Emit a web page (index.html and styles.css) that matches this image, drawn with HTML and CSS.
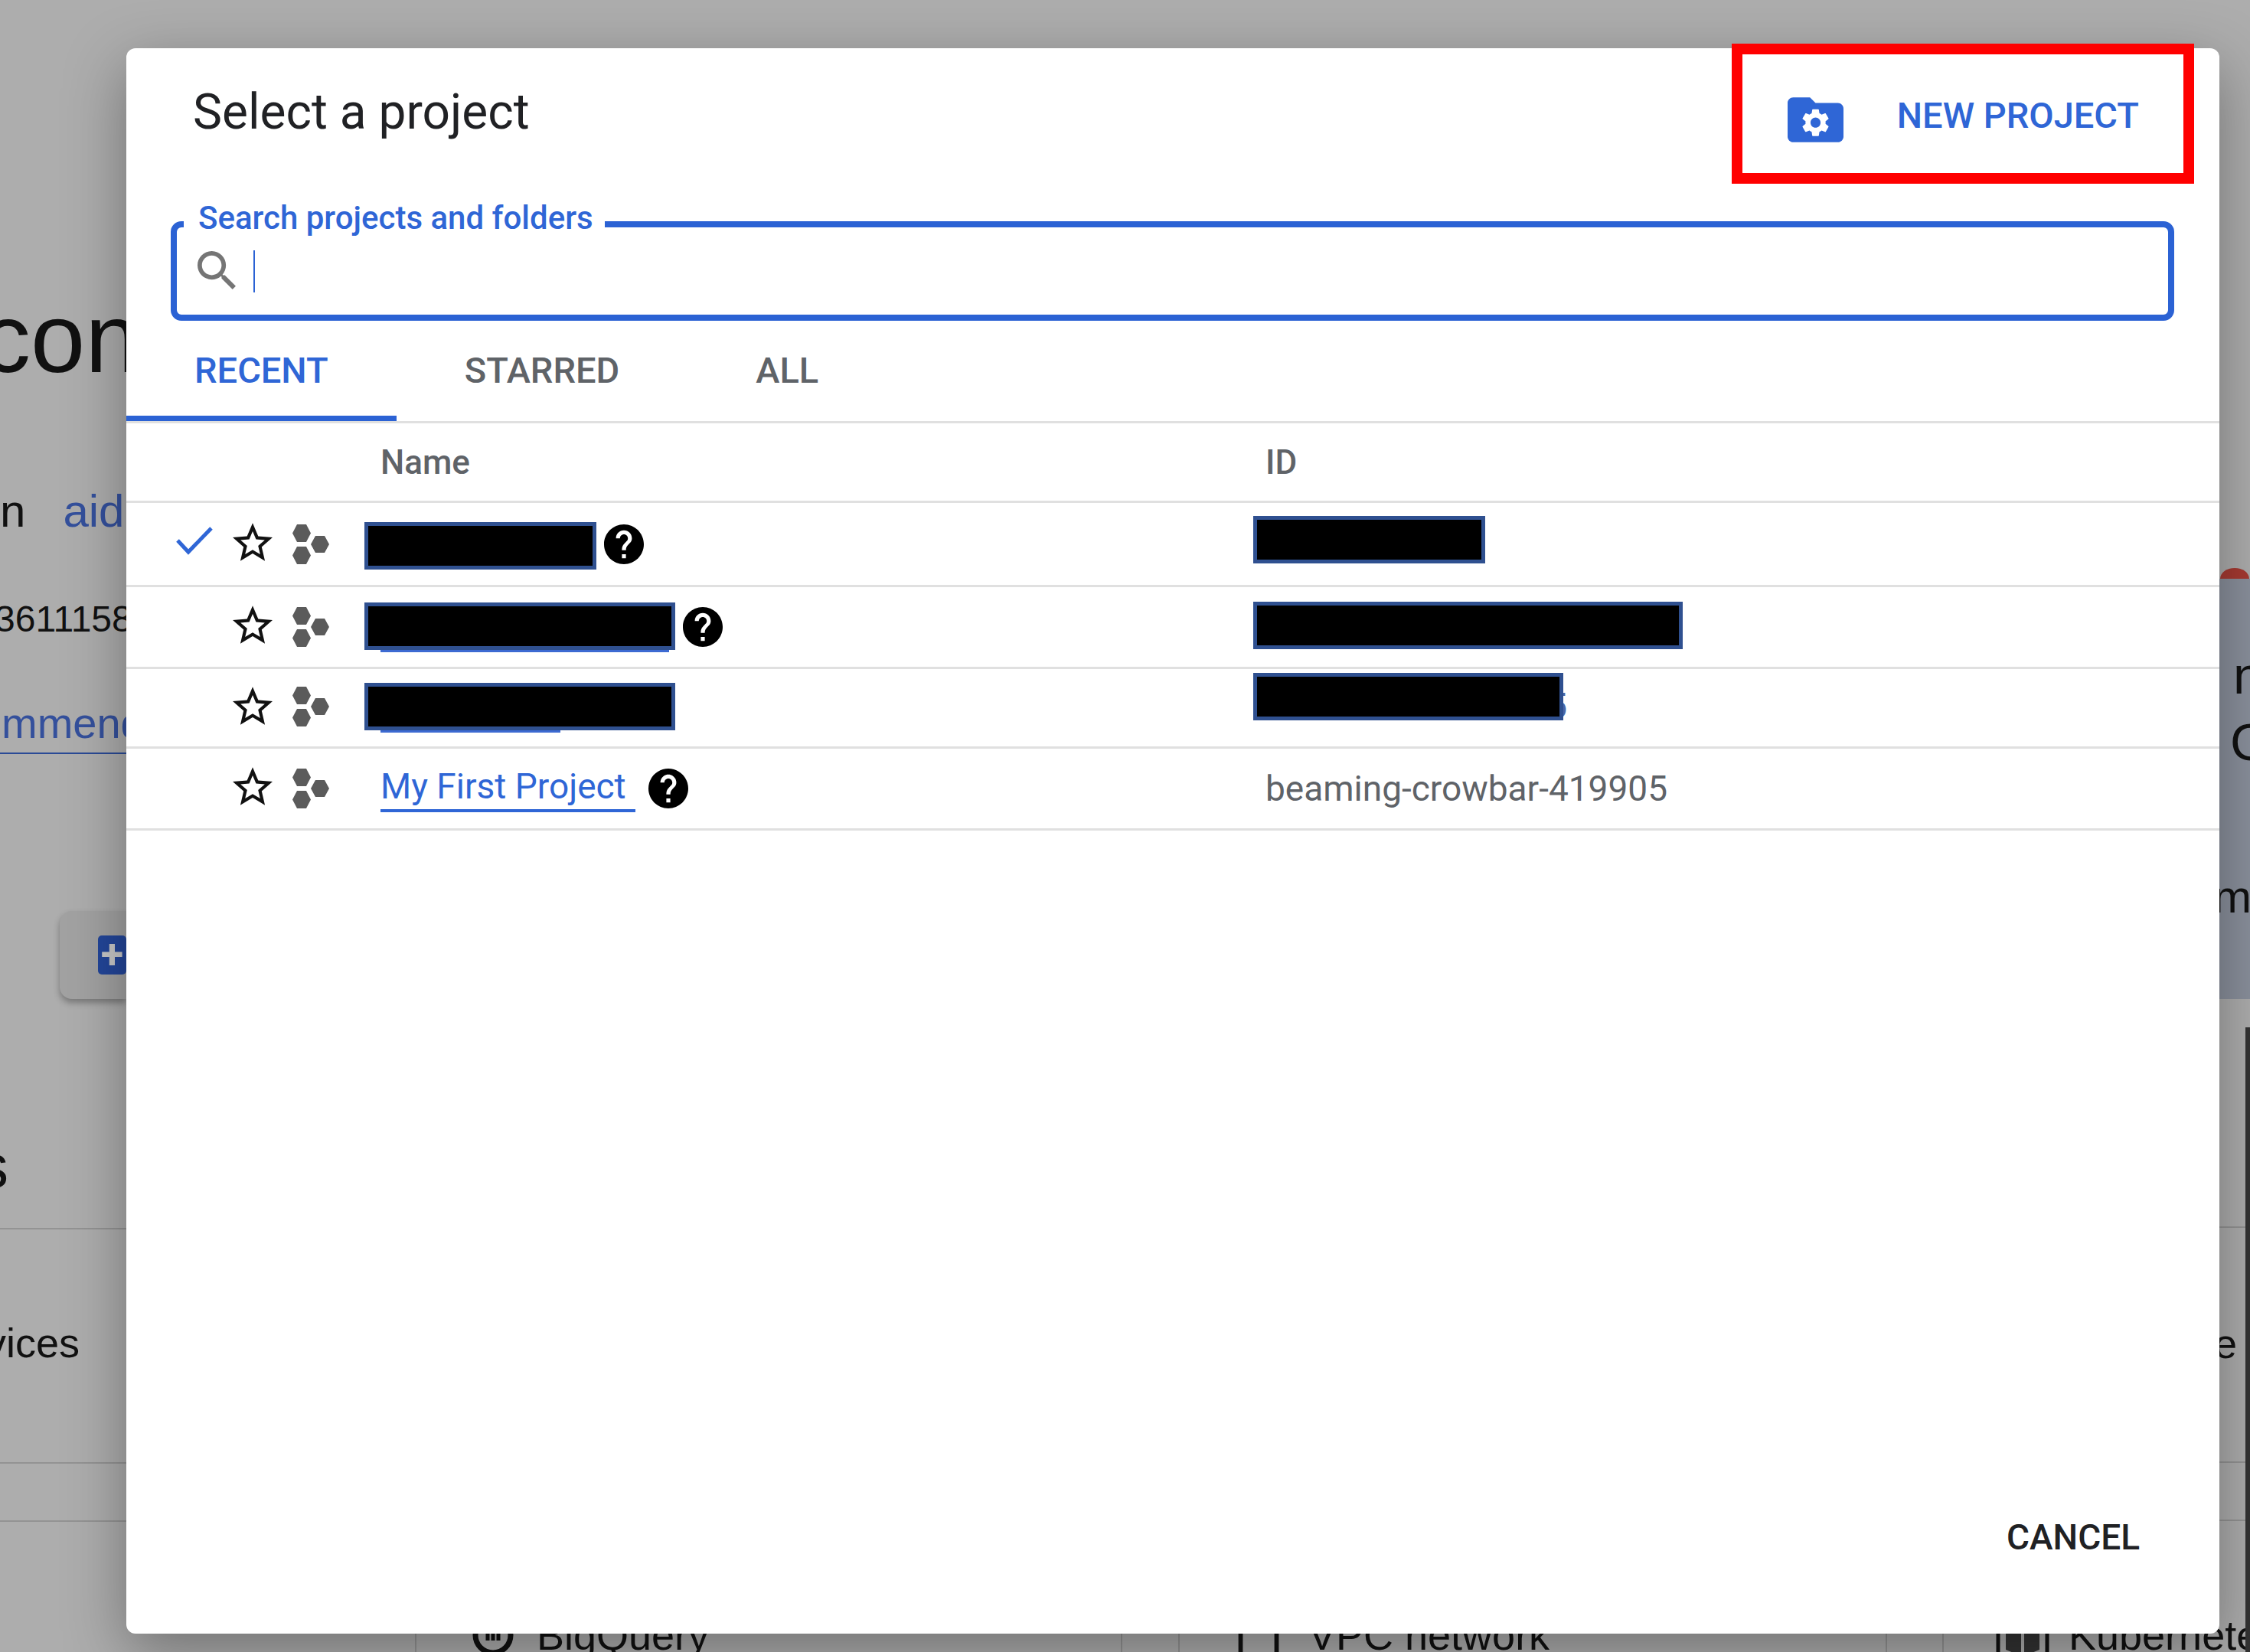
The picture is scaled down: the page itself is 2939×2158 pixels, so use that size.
FILE: index.html
```html
<!DOCTYPE html>
<html lang="en">
<head>
    <meta charset="UTF-8">
    <meta name="viewport" content="width=device-width, initial-scale=1.0">
    <title>Select a project</title>
    <link rel="stylesheet" href="styles.css">
</head>
<body>
    <!-- Page behind the dialog, only the edges show -->
    <div class="backdrop">
        <div class="upper">
            <div class="left-strip">
                <div class="bg-text bg-heading">con</div>
                <div class="bg-text bg-meta"><span>n</span><span class="bg-link">aid</span></div>
                <div class="bg-text bg-number">3611158</div>
                <div class="bg-text bg-recommend">mmend</div>
                <div class="bg-card"><span class="bg-card-icon">+</span></div>
                <div class="bg-text bg-section">s</div>
                <div class="bg-rule bg-rule-a"></div>
                <div class="bg-text bg-services">rvices</div>
                <div class="bg-rule bg-rule-b"></div>
                <div class="bg-rule bg-rule-c"></div>
            </div>
            <div class="right-strip">
                <div class="bg-arc"></div>
                <div class="bg-panel">
                    <div class="bg-panel-line"><span class="bg-panel-mark"></span><span class="bg-text bg-panel-n">n</span></div>
                    <div class="bg-text bg-panel-g">G</div>
                    <div class="bg-text bg-panel-m">m</div>
                </div>
                <div class="bg-rule bg-rule-d"></div>
                <div class="bg-text bg-panel-e">e</div>
                <div class="bg-rule bg-rule-e"></div>
                <div class="bg-rule bg-rule-c"></div>
            </div>
        </div>
        <div class="service-row">
            <div class="service service-first"><span class="bg-text service-clip">ge</span></div>
            <div class="service service-bq">
                <svg class="service-icon" viewBox="0 0 54 54"><circle cx="27" cy="27" r="23" fill="none" stroke="#111" stroke-width="7"/><path d="M20 14v20M34 14v20M27 8v26" stroke="#111" stroke-width="5"/></svg>
                <span class="bg-text">BigQuery</span>
            </div>
            <div class="service service-vpc">
                <svg class="service-icon service-icon-wide" viewBox="0 0 73 54"><path d="M4 0h16v6h-5v48H9V6H4zM53 0h16v6h-5v48h-6V6h-5z" fill="#111"/></svg>
                <span class="bg-text">VPC network</span>
            </div>
            <div class="service service-k8s">
                <svg class="service-icon service-icon-wide" viewBox="0 0 68 54"><path d="M2 0v54M66 0v54" stroke="#111" stroke-width="5"/><path d="M12 4l20 8v42L12 46zM56 4L36 12v42l20-8z" fill="#333"/></svg>
                <span class="bg-text">Kubernetes</span>
            </div>
        </div>
        <div class="scrollbar"></div>
    </div>

    <div class="dialog">
        <div class="dialog-header">
            <h1 class="dialog-title">Select a project</h1>
            <div class="new-project">
                <svg class="new-project-icon" viewBox="2 4 20 16">
                    <path d="M20 6h-8l-2-2H4c-1.1 0-2 .9-2 2v12c0 1.1.9 2 2 2h16c1.1 0 2-.9 2-2V8c0-1.1-.9-2-2-2z" fill="#2f66d6"/>
                    <path transform="translate(6 7) scale(.5)" fill="#fff" d="M19.14 12.94c.04-.3.06-.61.06-.94 0-.32-.02-.64-.07-.94l2.03-1.58c.18-.14.23-.41.12-.61l-1.92-3.32c-.12-.22-.37-.29-.59-.22l-2.39.96c-.5-.38-1.03-.7-1.62-.94l-.36-2.54c-.04-.24-.24-.41-.48-.41h-3.84c-.24 0-.43.17-.47.41l-.36 2.54c-.59.24-1.13.57-1.62.94l-2.39-.96c-.22-.08-.47 0-.59.22L2.74 8.87c-.12.21-.08.47.12.61l2.03 1.58c-.05.3-.09.63-.09.94s.02.64.07.94l-2.03 1.58c-.18.14-.23.41-.12.61l1.92 3.32c.12.22.37.29.59.22l2.39-.96c.5.38 1.03.7 1.62.94l.36 2.54c.05.24.24.41.48.41h3.84c.24 0 .44-.17.47-.41l.36-2.54c.59-.24 1.13-.56 1.62-.94l2.39.96c.22.08.47 0 .59-.22l1.92-3.32c.12-.22.07-.47-.12-.61l-2.01-1.58zM12 15.6c-1.98 0-3.6-1.62-3.6-3.6s1.62-3.6 3.6-3.6 3.6 1.62 3.6 3.6-1.62 3.6-3.6 3.6z"/>
                </svg>
                <span class="new-project-label">NEW PROJECT</span>
            </div>
        </div>

        <fieldset class="search">
            <legend class="search-label">Search projects and folders</legend>
            <div class="search-field">
                <svg class="search-icon" viewBox="3 3 17.5 17.5"><path fill="#757575" d="M15.5 14h-.79l-.28-.27C15.41 12.59 16 11.11 16 9.5 16 5.91 13.09 3 9.5 3S3 5.91 3 9.5 5.91 16 9.5 16c1.61 0 3.09-.59 4.23-1.57l.27.28v.79l5 4.99L20.49 19l-4.99-5zm-6 0C7.01 14 5 11.99 5 9.5S7.01 5 9.5 5 14 7.01 14 9.5 11.99 14 9.5 14z"/></svg>
                <span class="caret"></span>
            </div>
        </fieldset>

        <div class="tabs">
            <div class="tab tab-active">RECENT</div>
            <div class="tab">STARRED</div>
            <div class="tab">ALL</div>
        </div>

        <div class="project-table">
            <div class="row row-head">
                <div></div>
                <div></div>
                <div></div>
                <div class="head-name">Name</div>
                <div class="head-id">ID</div>
            </div>

            <div class="row">
                <svg class="check" viewBox="0 0 48 37"><path d="M2 18l14 15L46 2" fill="none" stroke="#2f66d6" stroke-width="5"/></svg>
                <svg class="star" viewBox="2 2 20 19"><use href="#star-path"/></svg>
                <svg class="hexes" viewBox="0 0 48 52"><use href="#hex-path"/></svg>
                <div class="name-cell">
                    <div class="name-stack name-stack-low"><div class="redact redact-short"></div></div>
                    <svg class="help" viewBox="2 2 20 20"><use href="#help-path"/></svg>
                </div>
                <div class="id-cell id-high-a"><div class="redact redact-short"></div></div>
            </div>

            <div class="row">
                <div></div>
                <svg class="star" viewBox="2 2 20 19"><use href="#star-path"/></svg>
                <svg class="hexes" viewBox="0 0 48 52"><use href="#hex-path"/></svg>
                <div class="name-cell">
                    <div class="name-stack">
                        <div class="redact redact-long"></div>
                        <div class="link-rule link-rule-long"></div>
                    </div>
                    <svg class="help" viewBox="2 2 20 20"><use href="#help-path"/></svg>
                </div>
                <div class="id-cell id-high-b"><div class="redact redact-wide"></div></div>
            </div>

            <div class="row">
                <div></div>
                <svg class="star" viewBox="2 2 20 19"><use href="#star-path"/></svg>
                <svg class="hexes hexes-high" viewBox="0 0 48 52"><use href="#hex-path"/></svg>
                <div class="name-cell">
                    <div class="name-stack">
                        <div class="redact redact-long"></div>
                        <div class="link-rule link-rule-short"></div>
                    </div>
                </div>
                <div class="id-cell id-high-c">
                    <div class="redact redact-mid"></div>
                    <span class="id-peek">5</span>
                </div>
            </div>

            <div class="row">
                <div></div>
                <svg class="star" viewBox="2 2 20 19"><use href="#star-path"/></svg>
                <svg class="hexes" viewBox="0 0 48 52"><use href="#hex-path"/></svg>
                <div class="name-cell">
                    <a class="project-link">My First Project</a>
                    <svg class="help help-link" viewBox="2 2 20 20"><use href="#help-path"/></svg>
                </div>
                <div class="id-cell id-text">beaming-crowbar-419905</div>
            </div>
        </div>

        <div class="dialog-footer">
            <span class="cancel">CANCEL</span>
        </div>

        <!-- Red annotation box around the button -->
        <div class="callout"></div>
    </div>

    <svg class="icon-defs" width="0" height="0">
        <defs>
            <path id="star-path" d="M22 9.24l-7.19-.62L12 2 9.19 8.63 2 9.24l5.46 4.73L5.82 21 12 17.27 18.18 21l-1.63-7.03L22 9.24zM12 15.4l-3.76 2.27 1-4.28-3.32-2.88 4.38-.38L12 6.1l1.71 4.04 4.38.38-3.32 2.88 1 4.28L12 15.4z"/>
            <path id="help-path" d="M12 2C6.48 2 2 6.48 2 12s4.48 10 10 10 10-4.48 10-10S17.52 2 12 2zm1 17h-2v-2h2v2zm2.07-7.75l-.9.92C13.45 12.9 13 13.5 13 15h-2v-.5c0-1.1.45-2.1 1.17-2.83l1.24-1.26c.37-.36.59-.86.59-1.41 0-1.1-.9-2-2-2s-2 .9-2 2H8c0-2.21 1.79-4 4-4s4 1.79 4 4c0 .88-.36 1.68-.93 2.25z"/>
            <path id="hex-path" d="M6 0h12l6 11.5L18 23H6L0 11.5zM6 29h12l6 11.5L18 52H6L0 40.5zM30 15h12l6 11L42 37H30l-6-11z"/>
        </defs>
    </svg>
</body>
</html>
```

FILE: styles.css
```css
* {
    box-sizing: border-box;
}

body {
    margin: 0;
    width: 2939px;
    height: 2158px;
    overflow: hidden;
    position: relative;
    font-family: Roboto, Arial, sans-serif;
    background-color: #adadad;
}

.icon-defs {
    display: block;
}

/* Backdrop */
.backdrop {
    display: flex;
    flex-direction: column;
    height: 2158px;
}

.upper {
    display: flex;
    justify-content: space-between;
    height: 2109px;
}

.left-strip {
    width: 165px;
    overflow: hidden;
}

.right-strip {
    width: 40px;
    overflow: hidden;
}

.bg-text {
    font-family: "Liberation Sans", Arial, sans-serif;
    color: #111;
    line-height: 1;
    white-space: nowrap;
}

.bg-heading {
    font-size: 128px;
    margin: 378px 0 0 -24px;
}

.bg-meta {
    display: flex;
    gap: 49px;
    font-size: 60px;
    margin: 132px 0 0 0;
}

.bg-link {
    color: #34509c;
}

.bg-number {
    font-size: 48px;
    margin: 87px 0 0 -7px;
}

.bg-recommend {
    font-size: 56px;
    margin-top: 84px;
    padding: 0 0 10px 2px;
    color: #34509c;
    border-bottom: 2px solid #2a4a96;
}

.bg-card {
    display: flex;
    align-items: center;
    height: 115px;
    margin: 205px 0 0 78px;
    padding-left: 50px;
    background-color: #a2a2a2;
    border-radius: 16px 0 0 16px;
    box-shadow: 0 5px 8px rgba(0, 0, 0, 0.3);
}

.bg-card-icon {
    display: block;
    width: 60px;
    height: 51px;
    background-color: #23469a;
    border-radius: 5px;
    color: #c8c8c8;
    font-size: 54px;
    font-weight: 700;
    line-height: 49px;
    text-align: center;
}

.bg-section {
    font-size: 80px;
    margin: 179px 0 0 -29px;
}

.bg-rule {
    height: 2px;
    background-color: rgba(0, 0, 0, 0.15);
}

.bg-rule-a {
    margin-top: 40px;
}

.bg-services {
    font-size: 54px;
    margin: 121px 0 0 -37px;
}

.bg-rule-b {
    margin-top: 129px;
}

.bg-rule-c {
    margin-top: 74px;
}

.bg-arc {
    width: 38px;
    height: 14px;
    margin: 742px 0 0 1px;
    background-color: #a63a32;
    border-radius: 19px 19px 0 0 / 14px 14px 0 0;
}

.bg-panel {
    height: 549px;
    padding-top: 92px;
    background-color: #8a909c;
}

.bg-panel-line {
    display: flex;
    height: 68px;
}

.bg-panel-mark {
    width: 5px;
    height: 4px;
    margin: 24px 0 0 1px;
    background-color: #111;
}

.bg-panel-n {
    font-size: 68px;
    margin-left: 17px;
}

.bg-panel-g {
    font-size: 68px;
    margin: 19px 0 0 14px;
}

.bg-panel-m {
    font-size: 60px;
    margin: 139px 0 0 -8px;
}

.bg-rule-d {
    margin-top: 297px;
}

.bg-panel-e {
    font-size: 54px;
    margin: 124px 0 0 -7px;
}

.bg-rule-e {
    margin-top: 127px;
}

.service-row {
    display: flex;
    height: 49px;
    overflow: hidden;
}

.service {
    display: flex;
    gap: 30px;
    font-size: 54px;
    flex-shrink: 0;
    border-right: 2px solid rgba(0, 0, 0, 0.15);
}

.service .bg-text {
    font-size: 54px;
}

.service-first {
    width: 544px;
}

.service-clip {
    margin-left: -64px;
}

.service-bq {
    width: 922px;
    padding-left: 73px;
}

.service-vpc {
    width: 926px;
    margin-left: 73px;
    padding-left: 68px;
    border-left: 2px solid rgba(0, 0, 0, 0.15);
}

.service-k8s {
    width: 402px;
    margin-left: 72px;
    padding-left: 68px;
    gap: 25px;
    border-left: 2px solid rgba(0, 0, 0, 0.15);
    border-right: 0;
}

.service-icon {
    width: 54px;
    height: 54px;
    flex-shrink: 0;
}

.service-icon-wide {
    width: 70px;
}

.scrollbar {
    position: absolute;
    top: 1342px;
    right: 0;
    bottom: 0;
    width: 6px;
    background-color: #333;
}

/* Dialog */
.dialog {
    position: absolute;
    top: 63px;
    left: 165px;
    display: flex;
    flex-direction: column;
    width: 2734px;
    height: 2071px;
    background-color: #fff;
    border-radius: 12px;
    box-shadow: 0 24px 80px rgba(0, 0, 0, 0.35);
}

.dialog-header {
    display: flex;
    justify-content: space-between;
    height: 198px;
    padding: 46px 105px 0 87px;
}

.dialog-title {
    margin: 0;
    font-size: 64px;
    font-weight: 400;
    line-height: 76px;
    color: #202124;
}

.new-project {
    display: flex;
    gap: 70px;
    margin-top: 14px;
}

.new-project-icon {
    width: 73px;
    height: 59px;
    margin-top: 4px;
}

.new-project-label {
    font-size: 47px;
    font-weight: 500;
    line-height: 56px;
    color: #2f66d6;
}

.callout {
    position: absolute;
    top: -6px;
    left: 2097px;
    width: 604px;
    height: 183px;
    border: 14px solid #f00;
}

.search {
    min-width: 0;
    margin: 0 59px 0 58px;
    padding: 0;
    border: 8px solid #2b62d4;
    border-radius: 14px;
}

.search-label {
    margin-left: 9px;
    padding: 0 15px 16px 19px;
    font-size: 42px;
    font-weight: 500;
    line-height: 48px;
    color: #2f66d6;
}

.search-field {
    display: flex;
    gap: 23px;
    height: 86px;
    padding: 2px 0 0 27px;
}

.search-icon {
    width: 50px;
    height: 50px;
    margin-top: 1px;
}

.caret {
    width: 2px;
    height: 55px;
    background-color: #2b62d4;
}

.tabs {
    display: flex;
    height: 134px;
    padding-top: 37px;
    border-bottom: 3px solid #e0e0e0;
}

.tab {
    height: 94px;
    padding: 0 89px;
    font-size: 47px;
    font-weight: 500;
    line-height: 56px;
    color: #5f6368;
}

.tab-active {
    color: #2f66d6;
    border-bottom: 7px solid #2b62d4;
}

.project-table {
    display: grid;
    grid-template-rows: 104px 110px 107px 104px 107px;
}

.row {
    display: grid;
    grid-template-columns: 139px 78px 94px 1161px 1fr;
    align-items: center;
    border-bottom: 3px solid #e0e0e0;
}

.head-name,
.head-id {
    font-size: 44px;
    font-weight: 500;
    line-height: 56px;
    color: #5f6368;
}

.head-name {
    padding-left: 21px;
}

.head-id {
    padding-left: 16px;
}

.check {
    width: 48px;
    height: 37px;
    margin: 0 0 8px 65px;
}

.star {
    width: 52px;
    height: 50px;
    margin-bottom: 6px;
    fill: #111;
}

.hexes {
    width: 48px;
    height: 52px;
    fill: #5b5b5b;
}

.hexes-high {
    margin-bottom: 3px;
}

.name-cell {
    display: flex;
    align-items: center;
}

.name-stack {
    display: flex;
    flex-direction: column;
}

.name-stack-low {
    margin-top: 5px;
}

.redact {
    height: 62px;
    flex-shrink: 0;
    background-color: #000;
    border: 5px solid #2f5090;
}

.redact-short {
    width: 303px;
}

.redact-long {
    width: 406px;
}

.redact-mid {
    width: 405px;
}

.redact-wide {
    width: 561px;
}

.link-rule {
    height: 3px;
    margin-left: 21px;
    background-color: #3d6ad2;
}

.link-rule-long {
    width: 377px;
}

.link-rule-short {
    width: 235px;
}

.help {
    width: 52px;
    height: 52px;
    margin-left: 10px;
    fill: #000;
}

.help-link {
    margin-left: 17px;
}

.project-link {
    margin-left: 21px;
    padding-right: 12px;
    padding-bottom: 3px;
    font-size: 46px;
    line-height: 54px;
    color: #2f66d6;
    border-bottom: 4px solid #2f66d6;
}

.id-cell {
    display: flex;
    align-items: center;
}

.id-high-a {
    margin-bottom: 11px;
}

.id-high-b {
    margin-bottom: 4px;
}

.id-high-c {
    margin-bottom: 29px;
}

.id-peek {
    display: block;
    width: 5px;
    height: 40px;
    overflow: hidden;
    margin-top: 24px;
    font-size: 46px;
    line-height: 40px;
    color: #4a67a8;
    direction: rtl;
}

.id-text {
    padding-left: 16px;
    font-size: 46px;
    line-height: 54px;
    color: #5f6368;
}

.dialog-footer {
    display: flex;
    justify-content: flex-end;
    margin-top: auto;
    padding: 0 104px 98px 0;
}

.cancel {
    font-size: 46px;
    font-weight: 500;
    line-height: 56px;
    color: #202124;
}
```
